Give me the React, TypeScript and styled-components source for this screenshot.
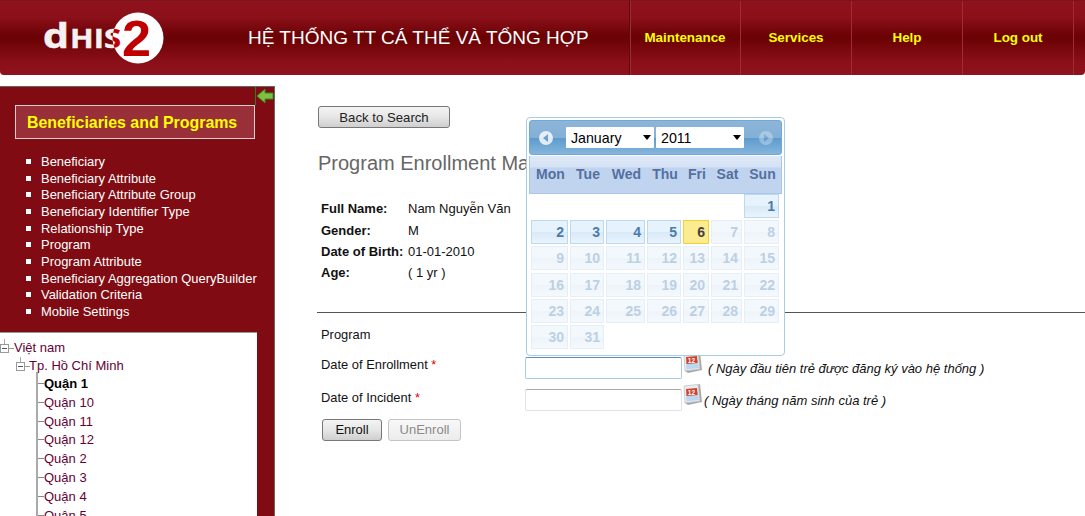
import React from 'react'
import styled, { createGlobalStyle } from 'styled-components'

const GlobalStyle = createGlobalStyle`
  html, body {
    margin: 0;
    height: 516px;
    overflow: hidden;
    background: #fff;
    font-family: "Liberation Sans", Arial, sans-serif;
  }
`

const NAV = ['Maintenance', 'Services', 'Help', 'Log out']
const MENU = [
  'Beneficiary',
  'Beneficiary Attribute',
  'Beneficiary Attribute Group',
  'Beneficiary Identifier Type',
  'Relationship Type',
  'Program',
  'Program Attribute',
  'Beneficiary Aggregation QueryBuilder',
  'Validation Criteria',
  'Mobile Settings',
]
const DISTRICTS = ['Quận 1', 'Quận 10', 'Quận 11', 'Quận 12', 'Quận 2', 'Quận 3', 'Quận 4', 'Quận 5']
const WEEKDAYS = ['Mon', 'Tue', 'Wed', 'Thu', 'Fri', 'Sat', 'Sun']
const PERSON = [
  ['Full Name:', 'Nam Nguyễn Văn'],
  ['Gender:', 'M'],
  ['Date of Birth:', '01-01-2010'],
  ['Age:', '( 1 yr )'],
]

const Logo = () => (
  <LogoSvg width="125" height="56" viewBox="0 0 125 56">
    <defs>
      <clipPath id="logoDisc">
        <circle cx="95" cy="28" r="25.5" />
      </clipPath>
    </defs>
    <text x="0" y="37.5" fontFamily="Open Sans" fontWeight="700" fontSize="34" fill="#f6f0f0" stroke="#f6f0f0" strokeWidth="0.6" textLength="26" lengthAdjust="spacingAndGlyphs">d</text>
    <text x="27" y="37.5" fontFamily="Open Sans" fontSize="26" fontWeight="700" fill="#f6f0f0" stroke="#f6f0f0" strokeWidth="0.4" textLength="51" lengthAdjust="spacingAndGlyphs">HIS</text>
    <circle cx="95" cy="28" r="25.5" fill="#fff" />
    <g clipPath="url(#logoDisc)">
      <text x="27" y="37.5" fontFamily="Open Sans" fontSize="26" fontWeight="700" fill="#c00000" stroke="#c00000" strokeWidth="0.4" textLength="51" lengthAdjust="spacingAndGlyphs">HIS</text>
    </g>
    <text x="79" y="45.5" fontFamily="Liberation Sans" fontWeight="700" fontSize="50" fill="#c00000" textLength="29" lengthAdjust="spacingAndGlyphs">2</text>
  </LogoSvg>
)

const CalendarIcon = () => (
  <IconSvg width="20" height="22" viewBox="0 0 20 22">
    <path d="M14 1 L17 0 L19 18 L5 21 L2 19 Z" fill="#a8a8a8" />
    <path d="M1 2 L15 0.5 L17 17 L2 19 Z" fill="#e9edf2" stroke="#c4c4c4" strokeWidth="0.8" />
    <path d="M3 9 L15 8 L16 16 L3.5 17.5 Z" fill="#bcd6ee" />
    <path d="M3 5 L14 4 L14.6 11 L3.6 12 Z" fill="#d2412c" />
    <text x="4.8" y="10.5" fontFamily="Liberation Sans" fontWeight="700" fontSize="6.5" fill="#fff">12</text>
  </IconSvg>
)

const NavArrow = ({ dir }: { dir: 'left' | 'right' }) => (
  <ArrowSvg width="20" height="20" viewBox="0 0 20 20" $faded={dir === 'right'}>
    <circle cx="10" cy="10" r="7" fill="#fff" />
    <path d={dir === 'left' ? 'M12 6 L7 10 L12 14 Z' : 'M8 6 L13 10 L8 14 Z'} fill="#6aa2d0" />
  </ArrowSvg>
)

export default function App() {
  return (
    <>
      <GlobalStyle />
      <Header>
        <Logo />
        <SiteTitle>HỆ THỐNG TT CÁ THỂ VÀ TỔNG HỢP</SiteTitle>
        <Nav>
          {NAV.map((n) => (
            <NavItem key={n}>{n}</NavItem>
          ))}
        </Nav>
      </Header>
      <Body>
        <Sidebar>
          <Collapse>
            <svg width="18" height="18" viewBox="0 0 18 18">
              <path d="M1 9 L9 2 L9 6 L17 6 L17 12 L9 12 L9 16 Z" fill="#7cc142" stroke="#3d8a1e" />
            </svg>
          </Collapse>
          <SideTitle>Beneficiaries and Programs</SideTitle>
          <Menu>
            {MENU.map((m) => (
              <MenuItem key={m}>{m}</MenuItem>
            ))}
          </Menu>
          <Tree>
            <TreeRow $depth={0}>Việt nam</TreeRow>
            <TreeRow $depth={1}>Tp. Hồ Chí Minh</TreeRow>
            <Leaves>
              {DISTRICTS.map((d, i) => (
                <Leaf key={d} $selected={i === 0}>{d}</Leaf>
              ))}
            </Leaves>
          </Tree>
        </Sidebar>
        <Main>
          <BackButton>Back to Search</BackButton>
          <Heading>Program Enrollment Ma</Heading>
          <InfoGrid>
            {PERSON.map(([k, v]) => (
              <React.Fragment key={k}>
                <InfoKey>{k}</InfoKey>
                <InfoValue>{v}</InfoValue>
              </React.Fragment>
            ))}
          </InfoGrid>
          <Rule />
          <FormGrid>
            <FormLabel>Program</FormLabel>
            <span />
            <FormLabel $lift={8}>Date of Enrollment <Req>*</Req></FormLabel>
            <FieldCell>
              <DateInput $active />
              <CalendarIcon />
              <Hint>( Ngày đầu tiên trẻ được đăng ký vào hệ thống )</Hint>
            </FieldCell>
            <FormLabel $lift={6}>Date of Incident <Req>*</Req></FormLabel>
            <FieldCell>
              <DateInput />
              <CalendarIcon />
              <Hint $tight>( Ngày tháng năm sinh của trẻ )</Hint>
            </FieldCell>
          </FormGrid>
          <Actions>
            <FormButton $w={60}>Enroll</FormButton>
            <FormButton $w={73} disabled>UnEnroll</FormButton>
          </Actions>
          <Calendar>
            <CalHeader>
              <NavArrow dir="left" />
              <SelectBox $w={88}>January</SelectBox>
              <SelectBox $w={88}>2011</SelectBox>
              <NavArrow dir="right" />
            </CalHeader>
            <CalWeek>
              <CalColumns>
                {WEEKDAYS.map((d) => (
                  <WeekDay key={d}>{d}</WeekDay>
                ))}
              </CalColumns>
            </CalWeek>
            <CalDays>
              {Array.from({ length: 6 }).map((_, i) => (
                <DayBlank key={i} />
              ))}
              {Array.from({ length: 31 }).map((_, i) => {
                const day = i + 1
                return (
                  <Day key={day} $state={day === 6 ? 'today' : day < 6 ? 'active' : 'off'}>
                    {day}
                  </Day>
                )
              })}
            </CalDays>
          </Calendar>
        </Main>
      </Body>
    </>
  )
}

const Header = styled.header`
  height: 75px;
  box-sizing: border-box;
  display: flex;
  align-items: center;
  border-radius: 0 0 4px 4px;
  border-top: 1px solid #7a1420;
  background: linear-gradient(#8f121d 0%, #8b101a 22%, #6a0204 48%, #6f0406 55%, #8a0f19 82%, #8f121d 100%);
`
const LogoSvg = styled.svg`
  margin-left: 43px;
  flex: none;
`
const SiteTitle = styled.div`
  margin-left: 80px;
  width: 381px;
  flex: none;
  color: #fff;
  font-size: 19px;
  white-space: nowrap;
`
const Nav = styled.nav`
  display: flex;
  height: 100%;
  border-left: 1px solid #5f0a10;
  box-shadow: inset 1px 0 0 #9c2a33;
`
const NavItem = styled.div`
  width: 111px;
  box-sizing: border-box;
  display: flex;
  align-items: center;
  justify-content: center;
  padding-bottom: 2px;
  border-right: 1px solid #a32a35;
  color: #ffff00;
  font-size: 13.4px;
  font-weight: 700;
`
const Body = styled.div`
  display: flex;
  margin-top: 11px;
  height: 430px;
  overflow: hidden;
`
const Sidebar = styled.aside`
  position: relative;
  width: 275px;
  flex: none;
  box-sizing: border-box;
  display: flex;
  flex-direction: column;
  background: #800b12;
  border-top: 1px solid #666;
  border-right: 1px solid #666;
`
const Collapse = styled.div`
  position: absolute;
  top: 0;
  right: 0;
  width: 18px;
  height: 18px;
  border-left: 1px solid #2f7d12;
`
const SideTitle = styled.div`
  flex: none;
  margin: 18px 0 0 15px;
  width: 240px;
  height: 34px;
  box-sizing: border-box;
  display: flex;
  align-items: center;
  padding: 1px 0 0 11px;
  border: 1px solid #d8d0d0;
  background: #993039;
  color: #ffff00;
  font-size: 15.9px;
  font-weight: 700;
  white-space: nowrap;
`
const Menu = styled.ul`
  flex: none;
  list-style: none;
  margin: 14px 0 0;
  padding: 0 0 0 26px;
`
const MenuItem = styled.li`
  display: flex;
  align-items: center;
  gap: 10px;
  height: 16.7px;
  color: #fff;
  font-size: 12.95px;
  white-space: nowrap;

  &::before {
    content: '';
    width: 5px;
    height: 5px;
    background: #fff;
    flex: none;
  }
`
const Tree = styled.div`
  width: 257px;
  margin-top: 12px;
  flex: 1;
  min-height: 0;
  box-sizing: border-box;
  padding-top: 6px;
  background: #fff;
  border-top: 1px solid #999;
  font-size: 13px;
  color: #660033;
`
const TreeRow = styled.div<{ $depth: number }>`
  position: relative;
  height: 18.4px;
  line-height: 18.4px;
  padding-left: ${({ $depth }) => 14 + $depth * 15}px;
  white-space: nowrap;
  background: linear-gradient(#aaa, #aaa) no-repeat ${({ $depth }) => 4 + $depth * 16}px 0 / 1px 5px;

  &::before {
    content: '';
    position: absolute;
    left: ${({ $depth }) => $depth * 16}px;
    top: 5px;
    width: 9px;
    height: 9px;
    box-sizing: border-box;
    border: 1px solid #999;
    background: linear-gradient(#555, #555) no-repeat center / 5px 1px, #fff;
  }
  &::after {
    content: '';
    position: absolute;
    left: ${({ $depth }) => $depth * 16 + 9}px;
    top: 9px;
    width: 5px;
    height: 1px;
    background: #999;
  }
`
const Leaves = styled.div`
  margin-left: 36px;
  border-left: 2px solid #aaa;
  margin-top: -4px;
  padding-top: 2.5px;
`
const Leaf = styled.div<{ $selected: boolean }>`
  display: flex;
  align-items: center;
  height: 18.8px;
  color: ${({ $selected }) => ($selected ? '#000' : '#660033')};
  font-weight: ${({ $selected }) => ($selected ? 700 : 400)};
  white-space: nowrap;

  &::before {
    content: '';
    width: 6px;
    height: 1px;
    background: #888;
  }
`
const Main = styled.main`
  position: relative;
  flex: 1;
  padding: 20px 0 0 43px;
  color: #111;
`
const BackButton = styled.button`
  display: block;
  width: 132px;
  height: 22px;
  padding: 0;
  border: 1px solid #777;
  border-radius: 3px;
  background: linear-gradient(#f4f4f4, #e6e6e6 50%, #cfcfcf);
  color: #222;
  font: 13.2px "Liberation Sans", Arial, sans-serif;
`
const Heading = styled.h2`
  margin: 23px 0 0;
  height: 24px;
  font-size: 20px;
  line-height: 24px;
  font-weight: 400;
  color: #666;
  white-space: nowrap;
`
const InfoGrid = styled.div`
  display: grid;
  grid-template-columns: 87px 1fr;
  grid-auto-rows: 21.4px;
  align-items: center;
  margin: 23px 0 0 3px;
  font-size: 13px;
`
const InfoKey = styled.div`
  font-weight: 700;
  white-space: nowrap;
`
const InfoValue = styled.div`
  white-space: nowrap;
`
const Rule = styled.hr`
  margin: 28px 0 0 -1px;
  height: 1px;
  border: 0;
  background: #555;
`
const FormGrid = styled.div`
  display: grid;
  grid-template-columns: 204px 1fr;
  grid-template-rows: 30px 38px 26px;
  margin: 7px 0 0 3px;
  align-items: center;
`
const FormLabel = styled.div<{ $lift?: number }>`
  margin-bottom: ${({ $lift }) => $lift ?? 0}px;
  font-size: 12.9px;
  white-space: nowrap;
`
const Req = styled.span`
  color: #d00;
`
const FieldCell = styled.div`
  display: flex;
  align-items: center;
  height: 22px;
`
const DateInput = styled.div<{ $active?: boolean }>`
  width: 157px;
  height: 22px;
  margin-bottom: 1px;
  box-sizing: border-box;
  border: 1px solid ${({ $active }) => ($active ? '#a9cce6' : '#e0e0ea')};
  border-top-color: ${({ $active }) => ($active ? '#5d8fb8' : '#aaa')};
  border-radius: 2px;
  background: #fff;
  flex: none;
`
const IconSvg = styled.svg`
  flex: none;
  margin: -12px 0 0 1px;
`
const Hint = styled.span<{ $tight?: boolean }>`
  margin-left: ${({ $tight }) => ($tight ? 1 : 5)}px;
  font-size: 13px;
  font-style: italic;
  white-space: nowrap;
`
const Actions = styled.div`
  display: flex;
  gap: 6px;
  margin: 5px 0 0 4px;
`
const FormButton = styled.button<{ $w: number }>`
  width: ${({ $w }) => $w}px;
  height: 22px;
  padding: 0;
  border: 1px solid ${({ disabled }) => (disabled ? '#c4c4c4' : '#777')};
  border-radius: 3px;
  background: ${({ disabled }) =>
    disabled ? 'linear-gradient(#f8f8f8, #ececec)' : 'linear-gradient(#f4f4f4, #e6e6e6 50%, #cfcfcf)'};
  color: ${({ disabled }) => (disabled ? '#8a8a8a' : '#111')};
  font: 13px "Liberation Sans", Arial, sans-serif;
`
const Calendar = styled.div`
  position: absolute;
  left: 251px;
  top: 31px;
  width: 259px;
  height: 239px;
  box-sizing: border-box;
  padding: 2px;
  background: #fff;
  border: 1px solid #a9cce6;
  border-radius: 4px;
`
const CalHeader = styled.div`
  height: 35px;
  box-sizing: border-box;
  display: flex;
  align-items: center;
  padding-left: 6px;
  border: 1px solid #6fa8dc;
  border-radius: 3px;
  background: linear-gradient(#8db5d8 0%, #84b0d6 50%, #5d9bcc 52%, #85b5dc 100%);

  svg:first-child {
    margin-right: 10px;
  }
  svg:last-child {
    margin-left: 10px;
  }
`
const ArrowSvg = styled.svg<{ $faded: boolean }>`
  flex: none;
  opacity: ${({ $faded }) => ($faded ? 0.3 : 0.8)};
`
const SelectBox = styled.div<{ $w: number }>`
  position: relative;
  width: ${({ $w }) => $w}px;
  height: 21px;
  margin-right: 2px;
  box-sizing: border-box;
  padding-left: 5px;
  line-height: 23px;
  background: #fff;
  border-radius: 1px;
  color: #000;
  font-size: 14.2px;

  &::after {
    content: '';
    position: absolute;
    right: 3px;
    top: 8px;
    border: 4px solid transparent;
    border-top: 5px solid #000;
    border-bottom: 0;
  }
`
const CalWeek = styled.div`
  height: 38px;
  box-sizing: border-box;
  margin-top: 1px;
  padding: 10px 2px 0 2px;
  border: 1px solid #a7c6ea;
  border-top: 0;
  background: linear-gradient(#dfe9f7 0, #d5e2f5 30%, #c1d4ef 32%, #c1d4ef 100%);
`
const COLUMNS = '37px 34px 39px 34px 26px 31px 35px'
const CalColumns = styled.div`
  display: grid;
  grid-template-columns: ${COLUMNS};
  column-gap: 2px;
`
const WeekDay = styled.div`
  text-align: center;
  color: #5470a0;
  font-size: 14px;
  font-weight: 700;
`
const CalDays = styled.div`
  display: grid;
  grid-template-columns: ${COLUMNS};
  column-gap: 2px;
  row-gap: 2.2px;
  grid-auto-rows: 24px;
  margin: 0 0 0 2px;
`
const DayBlank = styled.div``
const DAY_STYLES = {
  active: { border: '#bcd9ee', bg: 'linear-gradient(#e6f2fc 50%, #d8e9f8 50%, #eaf4fd)', color: '#4a7cab' },
  today: { border: '#f5cf35', bg: '#fcec90', color: '#444' },
  off: { border: '#e6eff7', bg: 'linear-gradient(#f3f8fc 50%, #edf4fa 50%, #f5f9fd)', color: '#bcd0e4' },
}
const Day = styled.div<{ $state: keyof typeof DAY_STYLES }>`
  box-sizing: border-box;
  padding-right: 3px;
  text-align: right;
  line-height: 22px;
  font-size: 14px;
  font-weight: 700;
  border: 1px solid ${({ $state }) => DAY_STYLES[$state].border};
  background: ${({ $state }) => DAY_STYLES[$state].bg};
  color: ${({ $state }) => DAY_STYLES[$state].color};
`
